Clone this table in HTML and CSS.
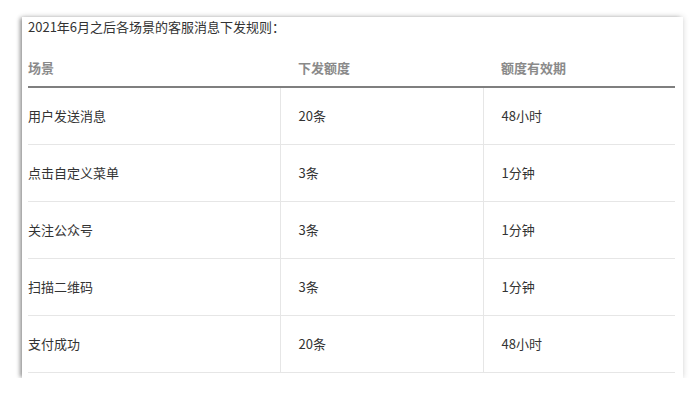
FILE: index.html
```html
<!DOCTYPE html>
<html lang="zh-CN">
<head>
  <meta charset="UTF-8" />
  <title>客服消息下发规则</title>
  <link rel="stylesheet" href="styles.css">
</head>
<body>
  <div class="card">
    <p class="intro">2021年6月之后各场景的客服消息下发规则：</p>

    <table class="rules">
      <colgroup>
        <col class="col-scene">
        <col class="col-quota">
        <col class="col-valid">
      </colgroup>
      <thead>
        <tr>
          <th>场景</th>
          <th>下发额度</th>
          <th>额度有效期</th>
        </tr>
      </thead>
      <tbody>
        <tr><td>用户发送消息</td><td>20条</td><td>48小时</td></tr>
        <tr><td>点击自定义菜单</td><td>3条</td><td>1分钟</td></tr>
        <tr><td>关注公众号</td><td>3条</td><td>1分钟</td></tr>
        <tr><td>扫描二维码</td><td>3条</td><td>1分钟</td></tr>
        <tr><td>支付成功</td><td>20条</td><td>48小时</td></tr>
      </tbody>
    </table>
  </div>
</body>
</html>
```

FILE: styles.css
```css
* {
  box-sizing: border-box;
  margin: 0;
  padding: 0;
}

body {
  background: #fff;
  color: #333;
  font-family: "Noto Sans CJK SC", "Noto Sans", sans-serif;
  font-size: 13px;
}

.card {
  width: 661px;
  margin: 17px 0 0 22px;
  padding: 0 8px 5px 6px;
  background: #fff;
  box-shadow: -3px 0 4px -1px rgba(0, 0, 0, 0.35), 0 0 6px rgba(0, 0, 0, 0.18);
}

.intro {
  line-height: 20px;
  color: #333;
}

.rules {
  width: 647px;
  margin-top: 11px;
  border-collapse: collapse;
  table-layout: fixed;
}

.col-scene { width: 252px; }
.col-quota { width: 203px; }
.col-valid { width: 192px; }

.rules th {
  text-align: left;
  font-weight: 700;
  color: #8a8a8a;
  line-height: 20px;
  padding: 10px 18px 8px;
  border-bottom: 2px solid #7f7f7f;
}

.rules td {
  line-height: 20px;
  padding: 18px;
  border-bottom: 1px solid #e6e6e6;
}

.rules th:first-child,
.rules td:first-child {
  padding-left: 0;
}

.rules td + td {
  border-left: 1px solid #e6e6e6;
}
```
